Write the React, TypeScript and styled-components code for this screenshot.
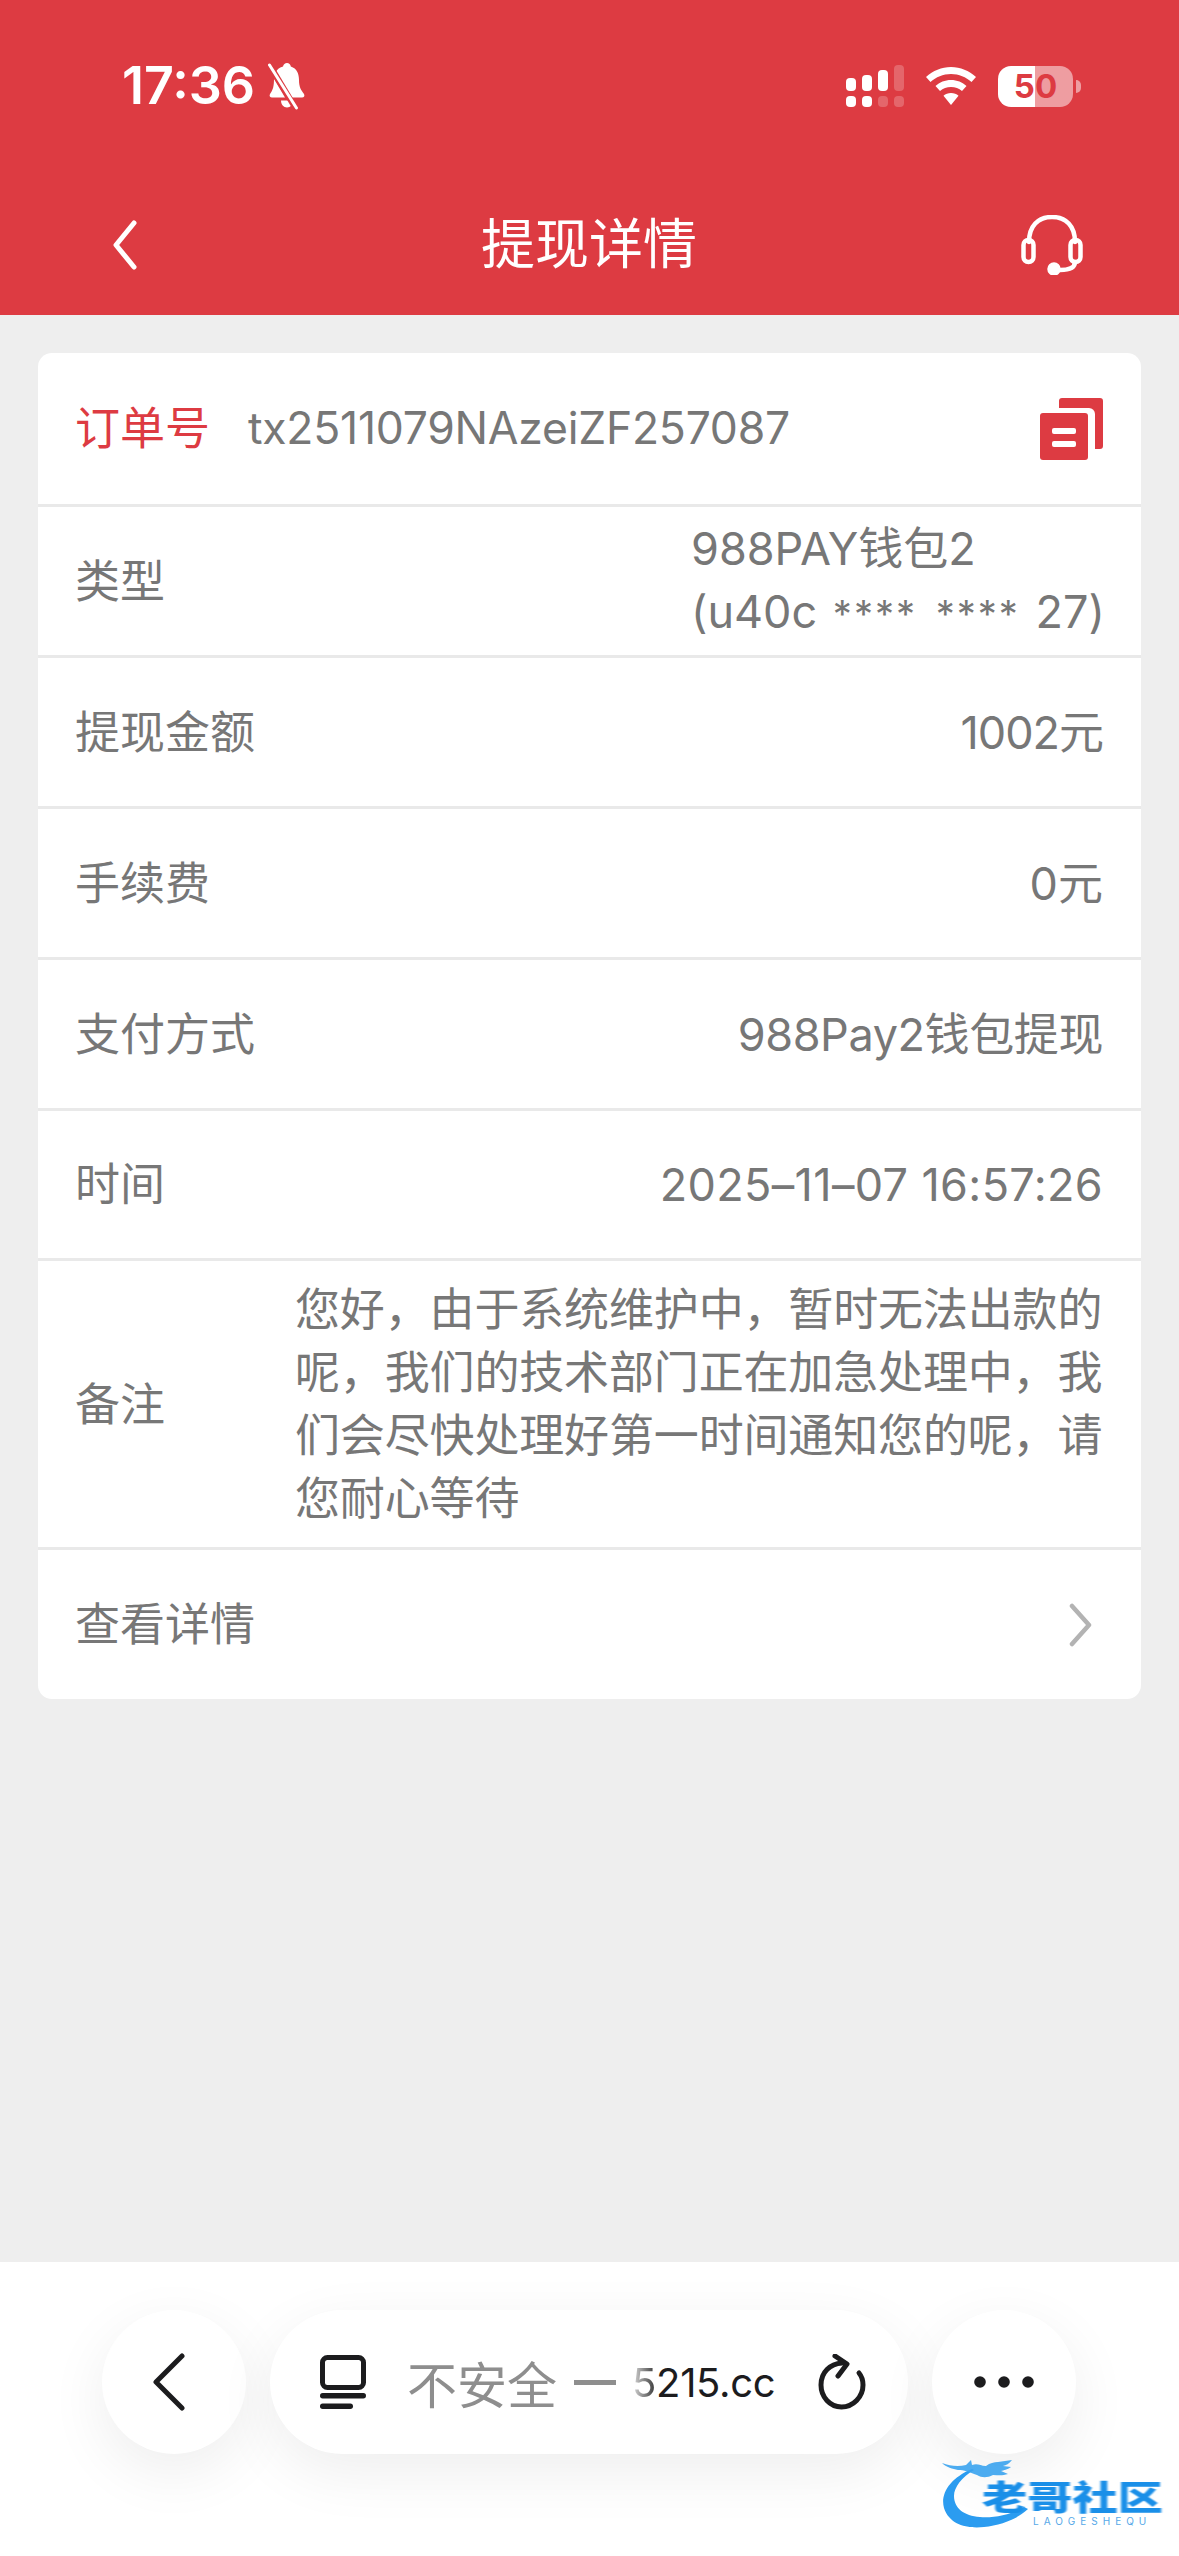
import React from "react";
import styled, { createGlobalStyle } from "styled-components";

const RED = "#dd3b42";
const CJK = `"Inter", "Noto Sans CJK SC", sans-serif`;

const Global = createGlobalStyle`
  html, body { margin: 0; padding: 0; background: #eeeeee; }
  * { box-sizing: border-box; }
`;
const Page = styled.div`
  position: relative;
  width: 1179px;
  height: 2556px;
  display: flex;
  flex-direction: column;
  background: #eeeeee;
  font-family: ${CJK};
  overflow: hidden;
`;
const Header = styled.header`
  height: 315px;
  background: ${RED};
  color: #fff;
  display: flex;
  flex-direction: column;
`;
const StatusBar = styled.div`
  height: 72px;
  margin-top: 50px;
  padding: 0 98px 0 122px;
  display: flex;
  align-items: center;
  justify-content: space-between;
`;
const TimeGroup = styled.div`
  display: flex;
  align-items: center;
  gap: 11px;
`;
const Time = styled.span`
  font-size: 52px;
  font-weight: 600;
  line-height: 60px;
`;
const StatusIcons = styled.div`
  display: flex;
  align-items: center;
  gap: 22px;
`;
const BatteryWrap = styled.div`
  display: flex;
  align-items: center;
  gap: 3px;
`;
const Battery = styled.div`
  width: 75px;
  height: 41px;
  border-radius: 13px;
  overflow: hidden;
  background: linear-gradient(to right, #fff 50%, rgba(255,255,255,.5) 50%);
  color: ${RED};
  font-size: 33px;
  font-weight: 700;
  line-height: 41px;
  text-align: center;
`;
const BatteryCap = styled.div`
  width: 5px;
  height: 13px;
  border-radius: 0 7px 7px 0;
  background: rgba(255,255,255,.5);
`;
const Nav = styled.nav`
  height: 90px;
  margin-top: 78px;
  margin-bottom: 25px;
  padding: 0 96px 0 112px;
  display: grid;
  grid-template-columns: 1fr auto 1fr;
  align-items: center;
`;
const NavRight = styled.div`
  display: flex;
  justify-content: flex-end;
`;
const Title = styled.h1`
  margin: 0 17px 0 0;
  font-size: 54px;
  font-weight: 400;
  line-height: 60px;
  font-family: ${CJK};
`;
const Card = styled.section`
  margin: 38px 38px 0;
  background: #fff;
  border-radius: 14px;
  overflow: hidden;
`;
const Row = styled.div<{ $h: number }>`
  height: ${(p) => p.$h}px;
  padding: 0 38px 0 37px;
  display: flex;
  align-items: center;
  justify-content: space-between;
  font-size: 45px;
  line-height: 63px;
  color: #777777;
  font-weight: 400;
  &:not(:last-child) { border-bottom: 3px solid #e9e9e9; }
`;
const OrderLabel = styled.span`
  color: ${RED};
`;
const OrderValue = styled.span`
  margin-left: 38px;
  margin-right: auto;
  font-size: 44.5px;
  letter-spacing: -0.25px;
`;
const Value = styled.span<{ $ls: number }>`
  letter-spacing: ${(p) => p.$ls}px;
`;
const ValueBlock = styled.div<{ $w: number }>`
  width: ${(p) => p.$w}px;
`;
const Note = styled.div`
  width: 808px;
  letter-spacing: -0.15px;
`;
const Masked = styled.span`
  white-space: nowrap;
`;
const Stars = styled.span`
  font-size: 38px;
  letter-spacing: 2px;
  margin: 0 3px;
`;
const Toolbar = styled.footer`
  margin-top: auto;
  height: 294px;
  padding: 48px 102px 0;
  background: #fff;
  display: flex;
  align-items: flex-start;
  gap: 24px;
`;
const RoundButton = styled.div`
  flex: 0 0 144px;
  height: 144px;
  border-radius: 50%;
  background: #fff;
  box-shadow: 0 18px 60px rgba(0,0,0,.07);
  display: flex;
  align-items: center;
  justify-content: center;
`;
const UrlPill = styled.div`
  flex: 0 0 638px;
  height: 144px;
  border-radius: 72px;
  background: #fff;
  box-shadow: 0 18px 60px rgba(0,0,0,.07);
  padding: 0 42px 0 50px;
  display: flex;
  align-items: center;
`;
const Insecure = styled.span`
  margin-left: 41px;
  font-size: 50px;
  color: #8e8e8e;
  white-space: nowrap;
`;
const Dash = styled.span`
  display: inline-block;
  width: 42px;
  height: 5px;
  margin-left: 17px;
  background: #8e8e8e;
`;
const Host = styled.span`
  margin-left: 16px;
  font-size: 40px;
  font-weight: 400;
  letter-spacing: -0.3px;
  color: #1c1c1e;
  white-space: nowrap;
`;
const FadedDigit = styled.span`
  background: linear-gradient(to right, #ddd, #333);
  -webkit-background-clip: text;
  background-clip: text;
  color: transparent;
`;
const Reload = styled.svg`
  margin-left: auto;
`;
const Watermark = styled.div`
  position: absolute;
  left: 938px;
  top: 2458px;
  width: 236px;
  height: 92px;
`;
const WatermarkName = styled.span`
  position: absolute;
  left: 44px;
  top: 20px;
  font-size: 34px;
  line-height: 40px;
  font-weight: 900;
  white-space: nowrap;
  color: #1a8fe8;
  transform: scaleX(1.33);
  transform-origin: left;
  filter: blur(0.6px);
`;
const WatermarkSub = styled.span`
  position: absolute;
  left: 95px;
  top: 57px;
  font-size: 10px;
  line-height: 12px;
  letter-spacing: 5px;
  color: #57a9e8;
  white-space: nowrap;
`;

const Bell = () => (
  <svg width="42" height="48" viewBox="0 0 42 48">
    <path d="M21 1c2 0 3.500 1.500 3.800 3.500C31 6.500 33 12 33 18c0 7 2 10 5 14 1 2 0 3.500-2 3.500H22L10 10c1-2.500 3-4.500 7-5.500C17.500 2.500 19 1 21 1Z" fill="#fff" />
    <path d="M8 17 19 35.500H6c-2 0-3-1.500-2-3.500 3-4 4-8 4-15Z" fill="#fff" />
    <path d="M15 38.500h12c0 4-2.500 7-6 7s-6-3-6-7Z" fill="#fff" />
    <path d="M3 2 30 47" stroke={RED} strokeWidth="6" />
    <path d="M3.500 3 30.500 46" stroke="#fff" strokeWidth="3" strokeLinecap="round" />
  </svg>
);
const Signal = () => (
  <svg width="58" height="42" viewBox="0 0 58 42" fill="#fff">
    <rect x="0" y="13" width="10" height="13" rx="4" />
    <rect x="16" y="10" width="10" height="16" rx="4" />
    <rect x="32" y="5" width="10" height="21" rx="4" />
    <rect x="48" y="0" width="10" height="26" rx="4" opacity=".22" />
    <rect x="0" y="31" width="10" height="11" rx="4" />
    <rect x="16" y="31" width="10" height="11" rx="4" />
    <rect x="32" y="31" width="10" height="11" rx="4" opacity=".22" />
    <rect x="48" y="31" width="10" height="11" rx="4" opacity=".22" />
  </svg>
);
const Wifi = () => (
  <svg width="50" height="38" viewBox="0 0 50 38" fill="#fff">
    <path d="M25 0c9.500 0 18 3.800 25 10l-4.500 5C40 10 33 7 25 7S10 10 4.500 15L0 10C7 3.800 15.500 0 25 0Z" />
    <path d="M25 13c6 0 11.500 2.300 15.500 6L36 24c-3-2.700-6.800-4-11-4s-8 1.300-11 4l-4.500-5c4-3.700 9.500-6 15.500-6Z" />
    <path d="M25 26c3 0 5.500 1 7.500 2.800L25 38l-7.500-9.200C19.500 27 22 26 25 26Z" />
  </svg>
);
const NavBack = () => (
  <svg width="26" height="50" viewBox="0 0 26 50" fill="none">
    <path d="M22 3 4 25l18 22" stroke="#fff" strokeWidth="5" strokeLinecap="round" strokeLinejoin="round" />
  </svg>
);
const Headset = () => (
  <svg width="62" height="60" viewBox="0 0 62 60" fill="none" stroke="#fff" strokeWidth="4.500">
    <path d="M8 27C8 11 17 2 31 2s23 9 23 25" strokeLinecap="round" />
    <rect x="2.500" y="25" width="10" height="22" rx="5" />
    <rect x="49.500" y="25" width="10" height="22" rx="5" />
    <path d="M54 47c0 6-6 8-15 8" strokeLinecap="round" />
    <circle cx="33" cy="54" r="4.500" fill="#fff" />
  </svg>
);
const CopyIcon = () => (
  <svg width="63" height="62" viewBox="0 0 63 62">
    <path d="M19 3a3 3 0 0 1 3-3h38a3 3 0 0 1 3 3v45a3 3 0 0 1-3 3h-5V16a6 6 0 0 0-6-6H19Z" fill={RED} />
    <rect x="0" y="15" width="48" height="47" rx="3" fill={RED} />
    <rect x="12" y="30" width="24" height="6" rx="2" fill="#fff" />
    <rect x="12" y="43" width="24" height="6" rx="2" fill="#fff" />
  </svg>
);
const ChevronWrap = styled.svg`
  margin-right: 9px;
`;
const RowChevron = () => (
  <ChevronWrap width="26" height="44" viewBox="0 0 26 44" fill="none">
    <path d="M4 3l17 19L4 41" stroke="#b3b3b3" strokeWidth="4.500" strokeLinecap="round" strokeLinejoin="round" />
  </ChevronWrap>
);
const BackSvg = styled.svg`
  margin-right: 10px;
`;
const ToolbarBack = () => (
  <BackSvg width="34" height="58" viewBox="0 0 34 58" fill="none">
    <path d="M30 3 4 29l26 26" stroke="#1c1c1e" strokeWidth="5" strokeLinecap="round" strokeLinejoin="round" />
  </BackSvg>
);
const Reader = () => (
  <svg width="46" height="54" viewBox="0 0 46 54" fill="none">
    <rect x="2.500" y="2.500" width="41" height="30" rx="5" stroke="#1c1c1e" strokeWidth="5" />
    <rect x="0" y="38" width="46" height="5.500" rx="2.700" fill="#1c1c1e" />
    <rect x="0" y="48.500" width="33" height="5.500" rx="2.700" fill="#1c1c1e" />
  </svg>
);
const Dots = () => (
  <svg width="60" height="14" viewBox="0 0 60 14" fill="#1c1c1e">
    <circle cx="6" cy="7" r="5.800" />
    <circle cx="30" cy="7" r="5.800" />
    <circle cx="54" cy="7" r="5.800" />
  </svg>
);
const DragonSvg = styled.svg`
  position: absolute;
  left: 0;
  top: 0;
  filter: blur(0.5px);
`;
const Dragon = () => (
  <DragonSvg width="236" height="92" viewBox="0 0 236 92" fill="none">
    <path d="M34 11C12 20 2 36 6 50c5 16 22 21 40 19 16-2 32-7 44-18l-4-2C72 57 56 60 42 59 26 58 16 50 16 38c0-9 8-19 20-26Z" fill="#2b9cf0" />
    <path d="M4 5c8 3 16 4 24 2l5-5 1 5c6-2 8 1 14 1 4-3 8-4 12-4l14-2c-3 4-6 5-9 6l8 1c-4 3-7 3-10 4l7 3c-6 2-10 1-15 1-6 3-11 3-16 0-8-3-13-5-19-5C15 11 8 9 4 5Z" fill="#3aa3ee" opacity=".9" />
  </DragonSvg>
);

export default function App() {
  return (
    <Page>
      <Global />
      <Header>
        <StatusBar>
          <TimeGroup>
            <Time>17:36</Time>
            <Bell />
          </TimeGroup>
          <StatusIcons>
            <Signal />
            <Wifi />
            <BatteryWrap>
              <Battery>50</Battery>
              <BatteryCap />
            </BatteryWrap>
          </StatusIcons>
        </StatusBar>
        <Nav>
          <NavBack />
          <Title>提现详情</Title>
          <NavRight>
            <Headset />
          </NavRight>
        </Nav>
      </Header>
      <Card>
        <Row $h={154}>
          <OrderLabel>订单号</OrderLabel>
          <OrderValue>tx2511079NAzeiZF257087</OrderValue>
          <CopyIcon />
        </Row>
        <Row $h={151}>
          <span>类型</span>
          <ValueBlock $w={412}>
            988PAY钱包2
            <br />
            <Masked>
              (u40c <Stars>****</Stars> <Stars>****</Stars> 27)
            </Masked>
          </ValueBlock>
        </Row>
        <Row $h={151}>
          <span>提现金额</span>
          <Value $ls={-1}>1002元</Value>
        </Row>
        <Row $h={151}>
          <span>手续费</span>
          <span>0元</span>
        </Row>
        <Row $h={151}>
          <span>支付方式</span>
          <Value $ls={-0.4}>988Pay2钱包提现</Value>
        </Row>
        <Row $h={150}>
          <span>时间</span>
          <Value $ls={0.35}>2025–11–07 16:57:26</Value>
        </Row>
        <Row $h={289}>
          <span>备注</span>
          <Note>
            您好，由于系统维护中，暂时无法出款的呢，我们的技术部门正在加急处理中，我们会尽快处理好第一时间通知您的呢，请您耐心等待
          </Note>
        </Row>
        <Row $h={149}>
          <span>查看详情</span>
          <RowChevron />
        </Row>
      </Card>
      <Toolbar>
        <RoundButton>
          <ToolbarBack />
        </RoundButton>
        <UrlPill>
          <Reader />
          <Insecure>不安全</Insecure>
          <Dash />
          <Host>
            <FadedDigit>5</FadedDigit>215.cc
          </Host>
          <Reload width="48" height="56" viewBox="0 0 48 56" fill="none">
            <path d="M24 9C12 10 3 18 3 31c0 12 9 22 20.500 22S45 43 45 31c0-5-1.500-9-4-12" stroke="#1c1c1e" strokeWidth="5" strokeLinecap="round" />
            <path d="M17 2 29 10 20 22" stroke="#1c1c1e" strokeWidth="5" strokeLinecap="round" strokeLinejoin="round" />
          </Reload>
        </UrlPill>
        <RoundButton>
          <Dots />
        </RoundButton>
      </Toolbar>
      <Watermark>
        <Dragon />
        <WatermarkName>老哥社区</WatermarkName>
        <WatermarkSub>LAOGESHEQU</WatermarkSub>
      </Watermark>
    </Page>
  );
}
